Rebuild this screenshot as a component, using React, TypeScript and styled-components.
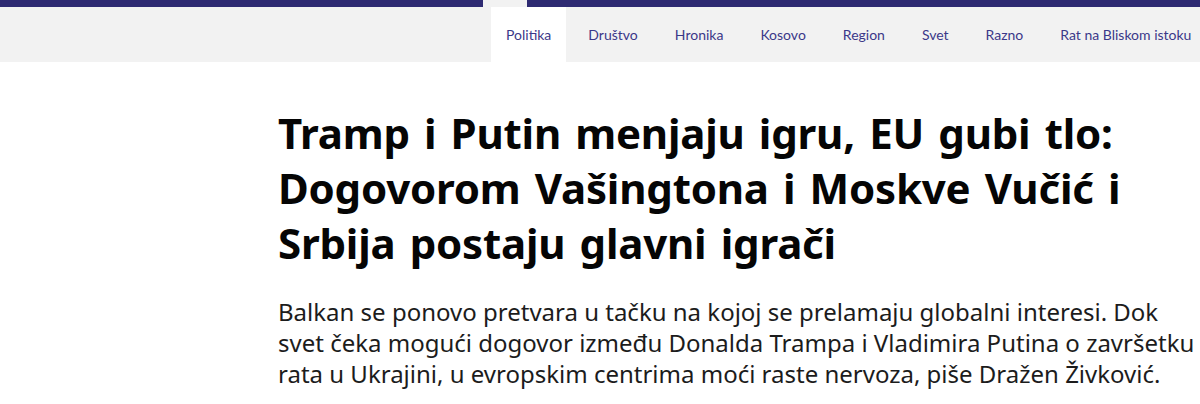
import React from "react";
import styled, { createGlobalStyle } from "styled-components";

const Global = createGlobalStyle`
  html, body { margin: 0; padding: 0; background: #ffffff; }
  body { font-family: "Noto Sans", Lato, sans-serif; overflow: hidden; }
`;

const Page = styled.div`
  width: 1200px;
  height: 404px;
  overflow: hidden;
  background: #fff;
`;

const TopBar = styled.div`
  display: flex;
  height: 7px;
`;

const BarSegment = styled.div<{ $light?: boolean; $w?: number }>`
  background: ${(p) => (p.$light ? "#f2f2f2" : "#2e2a72")};
  ${(p) => (p.$w ? `flex: 0 0 ${p.$w}px;` : "flex: 1 1 auto;")}
`;

const NavBar = styled.nav`
  display: flex;
  height: 55px;
  background: #f2f2f2;
  padding-left: 491px;
  gap: 7px;
  white-space: nowrap;
`;

const NavItem = styled.a<{ $active?: boolean }>`
  display: flex;
  align-items: center;
  padding: 0 15px;
  font-family: Lato, "Noto Sans", sans-serif;
  font-size: 14px;
  color: #3b3889;
  text-decoration: none;
  background: ${(p) => (p.$active ? "#ffffff" : "transparent")};
`;

const Article = styled.article`
  padding: 43px 0 0 278px;
`;

const Headline = styled.h1`
  margin: 0;
  font-family: "Noto Sans", "Open Sans", sans-serif;
  font-weight: 700;
  font-size: 42px;
  line-height: 55px;
  color: #050505;
  letter-spacing: -0.2px;
  word-spacing: 3.5px;
  width: 880px;
`;

const Lead = styled.p`
  margin: 26px 0 0;
  font-family: "Noto Sans", "Open Sans", sans-serif;
  font-size: 24px;
  line-height: 31px;
  color: #1c1c1c;
  white-space: nowrap;
`;

const items = [
  "Politika",
  "Društvo",
  "Hronika",
  "Kosovo",
  "Region",
  "Svet",
  "Razno",
  "Rat na Bliskom istoku",
];

export default function App() {
  return (
    <Page>
      <Global />
      <TopBar>
        <BarSegment $w={483} />
        <BarSegment $light $w={44} />
        <BarSegment />
      </TopBar>
      <NavBar>
        {items.map((it, i) => (
          <NavItem key={it} href="#" $active={i === 0}>
            {it}
          </NavItem>
        ))}
      </NavBar>
      <Article>
        <Headline>
          Tramp i Putin menjaju igru, EU gubi tlo: Dogovorom Vašingtona i Moskve Vučić i Srbija postaju glavni igrači
        </Headline>
        <Lead>
          Balkan se ponovo pretvara u tačku na kojoj se prelamaju globalni interesi. Dok
          <br />
          svet čeka mogući dogovor između Donalda Trampa i Vladimira Putina o završetku
          <br />
          rata u Ukrajini, u evropskim centrima moći raste nervoza, piše Dražen Živković.
        </Lead>
      </Article>
    </Page>
  );
}
